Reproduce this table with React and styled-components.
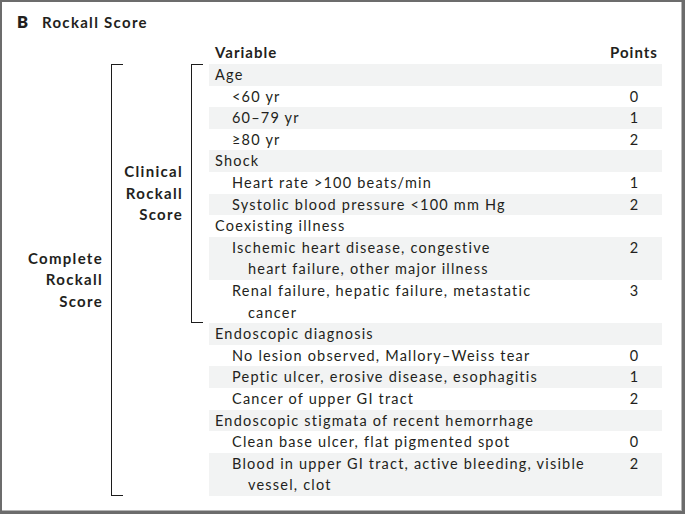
import React from "react";
import styled, { createGlobalStyle } from "styled-components";

const Global = createGlobalStyle`
  html, body { margin: 0; padding: 0; background: #fff; }
  body { font-family: Lato, "Noto Sans", sans-serif; color: #231f20; }
`;

const Frame = styled.div`
  box-sizing: border-box;
  width: 685px;
  height: 514px;
  border-style: solid;
  border-color: #6c6c6c;
  border-width: 2px 3px 3px 2px;
  box-shadow: inset -1px -1px 0 #b5b5b5;
  background: #fff;
  padding-top: 10px;
`;

const Title = styled.div`
  display: flex;
  align-items: baseline;
  padding-left: 15px;
  height: 22px;
  font-size: 15px;
  font-weight: 700;
  letter-spacing: 1.3px;
`;

const Letter = styled.span`
  font-size: 16.5px;
  font-weight: 800;
  width: 25px;
  letter-spacing: 0;
`;

const HeaderRow = styled.div`
  display: flex;
  margin-left: 207px;
  width: 453px;
  height: 30px;
  align-items: flex-end;
  padding-bottom: 2px;
  box-sizing: border-box;
  font-size: 15px;
  font-weight: 700;
  line-height: 20px;
  letter-spacing: 1px;
`;

const HeadVar = styled.div`
  flex: 1;
  padding-left: 6px;
`;

const HeadPts = styled.div`
  width: 56px;
  text-align: center;
`;

const Body = styled.div`
  display: flex;
`;

const GroupLabel = styled.div`
  width: ${(p) => p.$w}px;
  margin-right: 8px;
  align-self: center;
  text-align: right;
  font-size: 15px;
  font-weight: 700;
  line-height: 21.6px;
  letter-spacing: 1.3px;
`;

const Bracket = styled.div`
  box-sizing: border-box;
  width: 12px;
  margin-right: ${(p) => p.$gap || 0}px;
  border: 1.3px solid #1c1c1c;
  border-right: none;
`;

const Column = styled.div`
  display: flex;
  flex-direction: column;
`;

const Section = styled.div`
  display: flex;
`;

const Rows = styled.div`
  width: 453px;
  margin-left: ${(p) => p.$offset || 0}px;
`;

const Row = styled.div`
  display: flex;
  background: ${(p) => (p.$shade ? "#f2f3f3" : "transparent")};
  font-size: 14.5px;
  line-height: 21.6px;
  letter-spacing: 1.2px;
`;

const Cell = styled.div`
  flex: 1;
  box-sizing: border-box;
  padding-left: ${(p) => (p.$sub ? 39 : 6)}px;
  text-indent: ${(p) => (p.$sub ? -16 : 0)}px;
  padding-right: 2px;
  white-space: nowrap;
`;

const Pts = styled.div`
  width: 56px;
  text-align: center;
  letter-spacing: 0;
`;

const clinical = [
  { t: "Age" },
  { t: "<60 yr", s: 1, p: "0" },
  { t: "60–79 yr", s: 1, p: "1" },
  { t: "≥80 yr", s: 1, p: "2" },
  { t: "Shock" },
  { t: "Heart rate >100 beats/min", s: 1, p: "1" },
  { t: "Systolic blood pressure <100 mm Hg", s: 1, p: "2" },
  { t: "Coexisting illness" },
  { t: ["Ischemic heart disease, congestive", "heart failure, other major illness"], s: 1, p: "2" },
  { t: ["Renal failure, hepatic failure, metastatic", "cancer"], s: 1, p: "3" },
];

const endoscopic = [
  { t: "Endoscopic diagnosis" },
  { t: "No lesion observed, Mallory–Weiss tear", s: 1, p: "0" },
  { t: "Peptic ulcer, erosive disease, esophagitis", s: 1, p: "1" },
  { t: "Cancer of upper GI tract", s: 1, p: "2" },
  { t: "Endoscopic stigmata of recent hemorrhage" },
  { t: "Clean base ulcer, flat pigmented spot", s: 1, p: "0" },
  { t: ["Blood in upper GI tract, active bleeding, visible", "vessel, clot"], s: 1, p: "2" },
];

function renderRows(list) {
  return list.map((r, i) => (
    <Row key={i} $shade={i % 2 === 0}>
      <Cell $sub={!!r.s}>
        {Array.isArray(r.t) ? (
          <>
            {r.t[0]}
            <br />
            {r.t[1]}
          </>
        ) : (
          r.t
        )}
      </Cell>
      <Pts>{r.p || ""}</Pts>
    </Row>
  ));
}

export default function App() {
  return (
    <>
      <Global />
      <Frame>
        <Title>
          <Letter>B</Letter>
          <span>Rockall Score</span>
        </Title>
        <HeaderRow>
          <HeadVar>Variable</HeadVar>
          <HeadPts>Points</HeadPts>
        </HeaderRow>
        <Body>
          <GroupLabel $w={101}>
            Complete
            <br />
            Rockall
            <br />
            Score
          </GroupLabel>
          <Bracket />
          <Column>
            <Section>
              <GroupLabel $w={60}>
                Clinical
                <br />
                Rockall
                <br />
                Score
              </GroupLabel>
              <Bracket $gap={6} />
              <Rows>{renderRows(clinical)}</Rows>
            </Section>
            <Rows $offset={86}>{renderRows(endoscopic)}</Rows>
          </Column>
        </Body>
      </Frame>
    </>
  );
}
